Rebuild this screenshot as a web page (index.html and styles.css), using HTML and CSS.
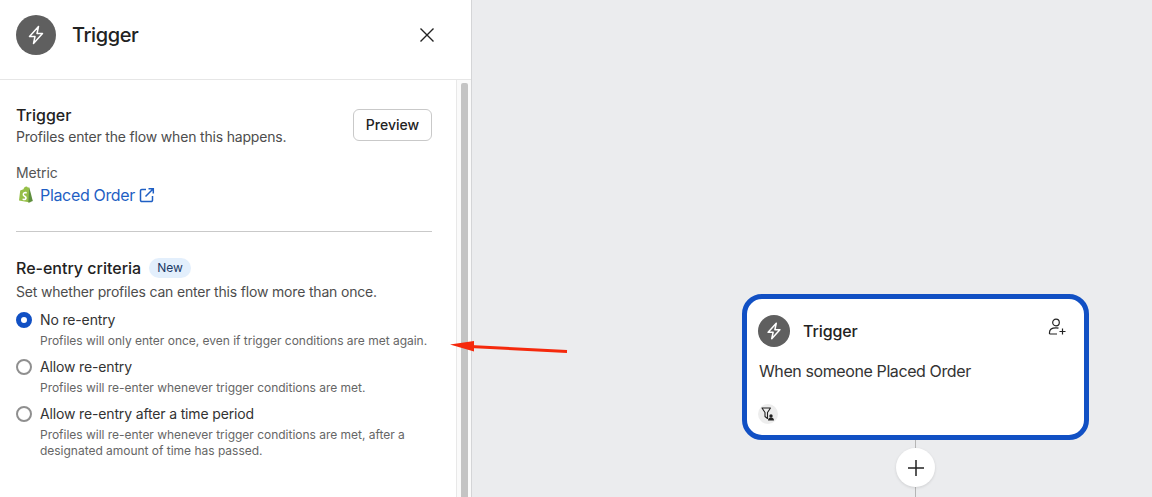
FILE: index.html
```html
<!DOCTYPE html>
<html>
<head>
  <title>Trigger</title>
  <link rel="stylesheet" href="styles.css">
</head>
<body>
  <div class="app">
    <aside class="panel">
      <header class="panel-head">
        <span class="bolt-circle bolt-large">
          <svg width="20" height="20" viewBox="0 0 20 20"><path d="M12.500 1.500 3.500 11.500h5.500L7.500 18.500l9-10H11z" fill="none" stroke="#fff" stroke-width="1.500" stroke-linejoin="round"/></svg>
        </span>
        <h1 class="panel-title">Trigger</h1>
        <svg class="close-icon" width="16" height="16" viewBox="0 0 16 16"><path d="M1.500 1.500 14.500 14.500M14.500 1.500 1.500 14.500" stroke="#222" stroke-width="1.400" fill="none"/></svg>
      </header>
      <div class="panel-body">
        <div class="panel-content">
          <section class="trigger-section">
            <div class="section-top">
              <div>
                <h2 class="section-title">Trigger</h2>
                <p class="section-desc">Profiles enter the flow when this happens.</p>
              </div>
              <button class="preview-btn">Preview</button>
            </div>
            <div class="metric-label">Metric</div>
            <div class="metric-row">
              <svg class="shopify-icon" width="16" height="18" viewBox="0 0 16 18">
                <path d="M2.200 4.500 5.500 3.300C6 1.600 7 .6 8.300.6c.7 0 1.200.4 1.500 1l1.500-.1 1 14.900L1 14.500z" fill="#95bf47"/>
                <path d="M11.300 1.500 14.800 15l-4.500 1.700z" fill="#5e8e3e"/>
                <path d="M8.900 6.300 8.400 7.700c-1.500-.6-2.500 0-2.400.7.100 1 2.800 1.200 2.800 3.500 0 2.100-2.600 3-4.400 1.800l.5-1.500c1 .8 2.200.7 2.200-.2 0-1.200-2.500-1.300-2.500-3.500 0-2.200 2.600-3.300 4.300-2.200z" fill="#fff"/>
              </svg>
              <a class="metric-link">Placed Order</a>
              <svg width="16" height="16" viewBox="0 0 16 16" fill="none" stroke="#1f5fc4" stroke-width="1.500"><path d="M7 2.500H2.800a1.300 1.300 0 0 0-1.300 1.300v9.400a1.300 1.300 0 0 0 1.300 1.300h9.400a1.300 1.300 0 0 0 1.300-1.300V9"/><path d="M6.500 9.500 14 2M9.500 1.700h4.800v4.800"/></svg>
            </div>
          </section>
          <hr class="divider">
          <section>
            <div class="criteria-head">
              <h2 class="section-title">Re-entry criteria</h2>
              <span class="new-badge">New</span>
            </div>
            <p class="section-desc">Set whether profiles can enter this flow more than once.</p>
            <div class="radio-list">
              <div class="radio-item">
                <span class="radio radio-on"></span>
                <div>
                  <div class="radio-label">No re-entry</div>
                  <div class="radio-help">Profiles will only enter once, even if trigger conditions are met again.</div>
                </div>
              </div>
              <div class="radio-item">
                <span class="radio"></span>
                <div>
                  <div class="radio-label">Allow re-entry</div>
                  <div class="radio-help">Profiles will re-enter whenever trigger conditions are met.</div>
                </div>
              </div>
              <div class="radio-item">
                <span class="radio"></span>
                <div>
                  <div class="radio-label">Allow re-entry after a time period</div>
                  <div class="radio-help">Profiles will re-enter whenever trigger conditions are met, after a designated amount of time has passed.</div>
                </div>
              </div>
            </div>
          </section>
        </div>
        <div class="scroll-track"><div class="scroll-thumb"></div></div>
      </div>
    </aside>
    <main class="canvas">
      <div class="line"></div>
      <div class="node">
        <div class="node-head">
          <span class="bolt-circle bolt-small">
            <svg width="18" height="18" viewBox="0 0 20 20"><path d="M12.500 1.500 3.500 11.500h5.500L7.500 18.500l9-10H11z" fill="none" stroke="#fff" stroke-width="1.700" stroke-linejoin="round"/></svg>
          </span>
          <span class="node-title">Trigger</span>
          <svg class="person-icon" width="18" height="18" viewBox="0 0 18 18" fill="none" stroke="#222" stroke-width="1.200"><circle cx="8" cy="4.500" r="3.300"/><path d="M1.500 16v-1.500c0-2.700 2.500-4.600 6.500-4.600 1 0 1.800.1 2.500.3M1.500 16H9M11.500 13.500h6M14.500 10.500v6"/></svg>
        </div>
        <div class="node-text">When someone Placed Order</div>
        <span class="filter-chip">
          <svg width="16" height="16" viewBox="0 0 16 16"><path d="M2 2h8.500L7.500 6.500v6L5 10.500v-4z" fill="none" stroke="#222" stroke-width="1.100" stroke-linejoin="round"/><circle cx="11" cy="10" r="1.700" fill="#222"/><path d="M8 14.500c0-2 1.200-3 3-3s3 1 3 3z" fill="#222"/></svg>
        </span>
      </div>
      <button class="add-btn">
        <svg width="18" height="18" viewBox="0 0 18 18"><path d="M9 1v16M1 9h16" stroke="#222" stroke-width="1.500"/></svg>
      </button>
    </main>
    <svg class="arrow" width="130" height="20" viewBox="0 0 130 20">
      <path d="M127 11.500 30 6.500" stroke="#f5290c" stroke-width="3"/>
      <path d="M10 4.500 34 1V11.500z" fill="#f5290c"/>
    </svg>
  </div>
</body>
</html>
```

FILE: styles.css
```css
* {
  box-sizing: border-box;
}

body {
  margin: 0;
  font-family: Inter, "Liberation Sans", sans-serif;
  color: #222;
  overflow: hidden;
}

.app {
  position: relative;
  display: flex;
  height: 497px;
}

.panel {
  display: flex;
  flex-direction: column;
  width: 472px;
  background-color: #fff;
  border-right: 1px solid #d4d5d7;
}

.panel-head {
  display: flex;
  align-items: center;
  height: 80px;
  padding: 0 36px 10px 16px;
  border-bottom: 1px solid #e6e6e6;
}

.bolt-circle {
  display: flex;
  align-items: center;
  justify-content: center;
  border-radius: 50%;
  background-color: #5f5f5f;
  flex-shrink: 0;
}

.bolt-large {
  width: 40px;
  height: 40px;
}

.bolt-small {
  width: 32px;
  height: 32px;
}

.panel-title {
  margin: 0 0 0 16px;
  font-size: 20px;
  font-weight: 500;
  letter-spacing: -0.4px;
  flex-grow: 1;
}

.panel-body {
  display: flex;
  flex-grow: 1;
  min-height: 0;
}

.panel-content {
  flex-grow: 1;
  padding: 26px 24px 0 16px;
}

.section-top {
  display: flex;
  justify-content: space-between;
  align-items: flex-start;
}

.section-title {
  margin: 0;
  font-size: 16px;
  line-height: 18px;
  font-weight: 500;
  color: #222;
}

.section-desc {
  margin: 4px 0 0;
  font-size: 14px;
  line-height: 18px;
  letter-spacing: -0.18px;
  color: #4d4d4d;
}

.preview-btn {
  width: 79px;
  height: 32px;
  margin-top: 3px;
  padding: 0 0 1px;
  background-color: #fff;
  border: 1px solid #c9c9c9;
  border-radius: 6px;
  font-family: inherit;
  font-size: 14px;
  font-weight: 500;
  color: #222;
}

.metric-label {
  margin-top: 18px;
  font-size: 14px;
  line-height: 18px;
  letter-spacing: -0.1px;
  color: #555;
}

.metric-row {
  display: flex;
  align-items: center;
  gap: 4px;
  margin-top: 3px;
  height: 20px;
}

.shopify-icon {
  margin: 0 2px 0 2px;
}

.metric-link {
  font-size: 16px;
  letter-spacing: -0.33px;
  color: #1f5fc4;
}

.divider {
  margin: 26px 0 26px;
  border: 0;
  border-top: 1px solid #c9c9c9;
}

.criteria-head {
  display: flex;
  align-items: center;
  gap: 8px;
  height: 20px;
}

.new-badge {
  padding: 0 8px;
  height: 20px;
  line-height: 20px;
  border-radius: 10px;
  background-color: #e3effc;
  font-size: 12px;
  color: #1c3a66;
}

.criteria-head + .section-desc {
  margin-top: 5px;
}

.radio-list {
  display: flex;
  flex-direction: column;
  gap: 8px;
  margin-top: 9px;
}

.radio-item {
  display: flex;
  gap: 8px;
}

.radio {
  flex-shrink: 0;
  width: 16px;
  height: 16px;
  margin-top: 2px;
  border: 2px solid #8f8f8f;
  border-radius: 50%;
}

.radio-on {
  border: 5px solid #1150c4;
}

.radio-label {
  font-size: 14px;
  line-height: 20px;
  letter-spacing: -0.15px;
  color: #333;
}

.radio-help {
  margin-top: 3px;
  font-size: 12px;
  line-height: 16px;
  letter-spacing: -0.02px;
  color: #666;
}

.scroll-track {
  flex-shrink: 0;
  width: 15px;
  padding: 3px 3px 0 4px;
  background-color: #fafafa;
  border-left: 1px solid #e8e8e8;
}

.scroll-thumb {
  height: 100%;
  background-color: #c4c4c4;
  border-radius: 2px 2px 0 0;
}

.canvas {
  position: relative;
  flex-grow: 1;
  background-color: #ebecee;
}

.line {
  position: absolute;
  left: 443px;
  top: 430px;
  bottom: 0;
  width: 1px;
  background-color: #b5b5b5;
}

.node {
  position: absolute;
  left: 270px;
  top: 294px;
  width: 347px;
  height: 146px;
  padding: 16px 11px;
  background-color: #fff;
  border: 5px solid #1150c4;
  border-radius: 20px;
}

.node-head {
  display: flex;
  align-items: center;
  gap: 13px;
}

.node-title {
  flex-grow: 1;
  font-size: 16px;
  font-weight: 500;
  letter-spacing: -0.1px;
}

.person-icon {
  margin: -8px 7px 0 0;
}

.node-text {
  margin-top: 14px;
  padding-left: 1px;
  font-size: 16px;
  line-height: 20px;
  letter-spacing: -0.4px;
  color: #333;
}

.filter-chip {
  position: absolute;
  left: 11px;
  bottom: 11px;
  display: flex;
  align-items: center;
  justify-content: center;
  width: 20px;
  height: 20px;
  border-radius: 50%;
  background-color: #ededed;
}

.add-btn {
  position: absolute;
  left: 424px;
  top: 448px;
  display: flex;
  align-items: center;
  justify-content: center;
  width: 39px;
  height: 39px;
  padding: 0;
  border: 0;
  border-radius: 50%;
  background-color: #fff;
  box-shadow: 0 1px 3px rgba(0, 0, 0, 0.12);
}

.arrow {
  position: absolute;
  left: 440px;
  top: 340px;
}
```
